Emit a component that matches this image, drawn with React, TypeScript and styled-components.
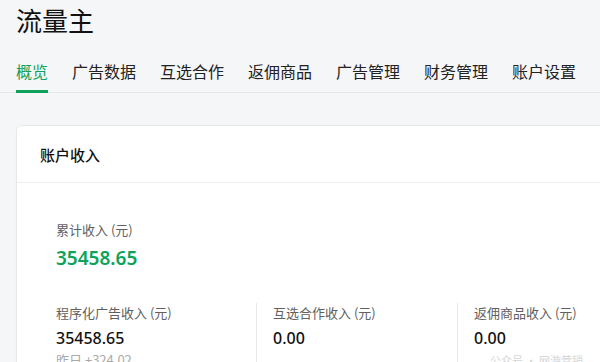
import React from "react";
import styled, { createGlobalStyle } from "styled-components";

const Global = createGlobalStyle`
  html, body { margin: 0; padding: 0; background: #f5f6f8; }
  body {
    font-family: "Noto Sans CJK SC", "Noto Sans", sans-serif;
    color: #191919;
    overflow: hidden;
  }
`;

const Page = styled.div`
  width: 600px;
  height: 362px;
  overflow: hidden;
  background: #f5f6f8;
`;

const Title = styled.h1`
  margin: 0;
  padding: 2px 0 0 16px;
  font-size: 26px;
  line-height: 36px;
  font-weight: 400;
  color: #111;
`;

const Tabs = styled.nav`
  display: flex;
  gap: 24px;
  margin-top: 22px;
  padding-left: 16px;
  border-bottom: 1px solid #e4e6ea;
  white-space: nowrap;
`;

const Tab = styled.div<{ $active?: boolean }>`
  position: relative;
  font-size: 16px;
  line-height: 22px;
  padding-bottom: 10px;
  color: ${(p) => (p.$active ? "#0ea35a" : "#222")};
  &::after {
    content: "";
    display: ${(p) => (p.$active ? "block" : "none")};
    position: absolute;
    left: 0;
    right: 0;
    bottom: -1px;
    height: 3px;
    background: #0ea35a;
  }
`;

const Card = styled.section`
  margin: 32px -20px 0 16px;
  background: #fff;
  border: 1px solid #e6e8eb;
  border-radius: 6px;
  box-shadow: 0 1px 2px rgba(0, 0, 0, 0.03);
`;

const CardHeader = styled.div`
  height: 56px;
  display: flex;
  align-items: center;
  padding-left: 23px;
  font-size: 15px;
  font-weight: 500;
  color: #111;
  border-bottom: 1px solid #eceef0;
`;

const CardBody = styled.div`
  padding: 37px 0 0 39px;
`;

const Label = styled.div`
  font-size: 13px;
  line-height: 20px;
  color: #606060;
`;

const Total = styled.div`
  margin-top: 4px;
  font-family: "Noto Sans", sans-serif;
  font-size: 19px;
  line-height: 28px;
  font-weight: 600;
  color: #0ea35a;
`;

const Stats = styled.div`
  display: grid;
  grid-template-columns: 200px 201px 201px;
  margin-top: 31px;
`;

const Stat = styled.div<{ $first?: boolean }>`
  padding-left: ${(p) => (p.$first ? "0" : "16px")};
  border-left: ${(p) => (p.$first ? "none" : "1px solid #e8eaed")};
  position: relative;
`;

const Value = styled.div`
  margin-top: 3px;
  font-family: "Noto Sans", sans-serif;
  font-size: 16px;
  line-height: 24px;
  font-weight: 500;
  color: #111;
`;

const Sub = styled.div`
  font-size: 13px;
  line-height: 20px;
  color: #aaa;
`;

const Watermark = styled.div`
  position: absolute;
  left: 32px;
  top: 47px;
  font-size: 11px;
  line-height: 20px;
  color: #ccc;
  opacity: 0.8;
  white-space: nowrap;
`;

const tabs = ["概览", "广告数据", "互选合作", "返佣商品", "广告管理", "财务管理", "账户设置"];

export default function App() {
  return (
    <Page>
      <Global />
      <Title>流量主</Title>
      <Tabs>
        {tabs.map((t, i) => (
          <Tab key={t} $active={i === 0}>
            {t}
          </Tab>
        ))}
      </Tabs>
      <Card>
        <CardHeader>账户收入</CardHeader>
        <CardBody>
          <Label>累计收入 (元)</Label>
          <Total>35458.65</Total>
          <Stats>
            <Stat $first>
              <Label>程序化广告收入 (元)</Label>
              <Value>35458.65</Value>
              <Sub>昨日 +324.02</Sub>
            </Stat>
            <Stat>
              <Label>互选合作收入 (元)</Label>
              <Value>0.00</Value>
            </Stat>
            <Stat>
              <Label>返佣商品收入 (元)</Label>
              <Value>0.00</Value>
              <Watermark>公众号 · 网游营销</Watermark>
            </Stat>
          </Stats>
        </CardBody>
      </Card>
    </Page>
  );
}
